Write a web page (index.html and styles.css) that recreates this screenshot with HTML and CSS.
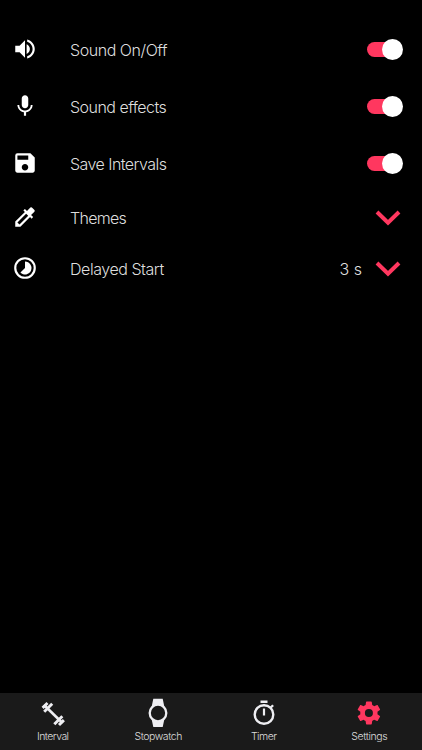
FILE: index.html
```html
<!DOCTYPE html>
<html lang="en">
<head>
<meta charset="utf-8">
<title>Settings</title>
<link rel="stylesheet" href="styles.css">
</head>
<body>
<main class="settings">
  <div class="row">
    <svg class="icon" viewBox="0 0 24 24"><path d="M3 9v6h4l5 5V4L7 9H3zm10.500-1.500v9c1.800-.7 3-2.450 3-4.500s-1.200-3.800-3-4.500zM14 3.230v2.060c2.890.86 5 3.540 5 6.710s-2.110 5.850-5 6.710v2.060c4.010-.91 7-4.490 7-8.770s-2.990-7.860-7-8.770z"/></svg>
    <span class="label">Sound On/Off</span><span class="toggle"></span>
  </div>
  <div class="row">
    <svg class="icon" viewBox="0 0 24 24"><path d="M12 14c1.660 0 3-1.340 3-3V5c0-1.660-1.340-3-3-3S9 3.340 9 5v6c0 1.660 1.340 3 3 3zm5.300-3c0 3-2.540 5.100-5.300 5.100S6.700 14 6.700 11H5c0 3.410 2.720 6.230 6 6.720V21h2v-3.280c3.280-.48 6-3.300 6-6.720h-1.700z"/></svg>
    <span class="label effects">Sound effects</span><span class="toggle"></span>
  </div>
  <div class="row">
    <svg class="icon" viewBox="0 0 24 24"><path d="M17 3H5a2 2 0 0 0-2 2v14c0 1.100.89 2 2 2h14c1.100 0 2-.9 2-2V7l-4-4zm-5 16c-1.660 0-3-1.340-3-3s1.340-3 3-3 3 1.340 3 3-1.340 3-3 3zm3-10H5V5h10v4z"/></svg>
    <span class="label intervals">Save Intervals</span><span class="toggle"></span>
  </div>
  <div class="row short">
    <svg class="icon" viewBox="0 0 24 24"><path d="M20.710 5.630l-2.340-2.340a1 1 0 0 0-1.410 0l-3.120 3.120-1.930-1.910-1.410 1.410 1.420 1.420L3 16.250V21h4.750l8.920-8.920 1.420 1.420 1.410-1.410-1.920-1.920 3.120-3.120c.4-.4.4-1.030.01-1.420zM6.920 19L5 17.080l8.060-8.060 1.920 1.920L6.920 19z"/></svg>
    <span class="label themes">Themes</span>
    <svg class="chevron" viewBox="0 0 26 16"><path d="M2 2L13 12.700 24 2"/></svg>
  </div>
  <div class="row short">
    <svg class="icon" viewBox="0 0 24 24"><path d="M12 2a10 10 0 1 0 0 20 10 10 0 0 0 0-20zm0 18a8 8 0 1 1 0-16 8 8 0 0 1 0 16zM12 6v6l-4.240 4.240A6 6 0 1 0 12 6z"/></svg>
    <span class="label">Delayed Start</span>
    <span class="value">3 s</span>
    <svg class="chevron" viewBox="0 0 26 16"><path d="M2 2L13 12.700 24 2"/></svg>
  </div>
</main>
<nav class="tabs">
  <div class="tab interval">
    <svg viewBox="0 0 30 30"><g class="line"><path d="M6 7l18.500 18" stroke-width="2.600"/><path d="M4.600 9.900l4.900-4.900M6.200 13.800l8-8M16.300 26.200l8-8M21 27l4.900-4.900" stroke-width="2.900" stroke-linecap="butt"/></g></svg>
    <span>Interval</span>
  </div>
  <div class="tab stopwatch">
    <svg viewBox="0 0 30 30"><path d="M10.300.8h9.400l1.500 7.200H8.800zM8.800 22h12.400l-1.500 7h-9.400z"/><circle class="face" cx="15" cy="15" r="8.300" stroke-width="2.300"/></svg>
    <span>Stopwatch</span>
  </div>
  <div class="tab timer">
    <svg viewBox="0 0 30 30"><path d="M11.500 2.600h7v2.300h-7zM13.900 10.500h2.200v7h-2.200z"/><g class="line"><circle cx="15" cy="16.500" r="9.300" stroke-width="2.400"/><path d="M21.500 9.800l2.600-2.600" stroke-width="2.300"/></g></svg>
    <span>Timer</span>
  </div>
  <div class="tab active">
    <svg viewBox="0 0 30 30"><path transform="translate(1.100 1.200) scale(1.150)" d="M19.430 12.980c.04-.32.070-.64.070-.98s-.03-.66-.07-.98l2.110-1.650c.19-.15.24-.42.120-.64l-2-3.460c-.12-.22-.39-.3-.61-.22l-2.490 1c-.52-.4-1.080-.73-1.690-.98l-.38-2.650A.488.488 0 0 0 14 2h-4c-.25 0-.46.180-.49.420l-.38 2.650c-.61.250-1.170.590-1.690.98l-2.490-1c-.23-.09-.49 0-.61.220l-2 3.460c-.13.220-.07.490.12.640l2.110 1.650c-.04.320-.07.650-.07.980s.03.660.07.980l-2.110 1.650c-.19.150-.24.420-.12.640l2 3.460c.12.220.39.300.61.220l2.490-1c.52.400 1.080.730 1.690.980l.38 2.650c.03.240.24.420.49.420h4c.25 0 .46-.18.490-.42l.38-2.650c.61-.25 1.170-.59 1.690-.98l2.490 1c.23.090.49 0 .61-.22l2-3.460c.12-.22.070-.49-.12-.64l-2.110-1.650zM12 15.500a3.500 3.500 0 1 1 0-7 3.500 3.500 0 0 1 0 7z"/></svg>
    <span>Settings</span>
  </div>
</nav>
</body>
</html>
```
FILE: styles.css
```css
* { box-sizing: border-box; }
body {
  margin: 0;
  height: 750px;
  display: flex;
  flex-direction: column;
  background: #000;
  color: #dedede;
  font-family: Inter, "Liberation Sans", sans-serif;
  font-weight: 300;
  overflow: hidden;
}
.settings { flex: 1; padding-top: 21px; }
.row {
  height: 57px;
  display: flex;
  align-items: center;
  padding: 0 19px 0 12px;
}
.row.short { height: 51px; padding-right: 21px; }
.icon { width: 26px; height: 26px; fill: #fff; margin-top: -1px; }
.label {
  margin-left: 32px;
  margin-top: 1px;
  flex: 1;
  font-size: 16px;
  line-height: 20px;
  white-space: nowrap;
  letter-spacing: -.45px;
}
.effects { letter-spacing: -.53px; }
.intervals { letter-spacing: -.55px; }
.themes { letter-spacing: -.7px; }
.value { font-size: 16px; margin-top: 1px; margin-right: 13px; }
.toggle {
  width: 36px;
  height: 21px;
  display: grid;
  align-items: center;
  margin-top: -1px;
}
.toggle::before,
.toggle::after { content: ""; grid-area: 1 / 1; }
.toggle::before {
  width: 30px;
  height: 15px;
  border-radius: 8px;
  background: #ff375f;
}
.toggle::after {
  justify-self: end;
  width: 21px;
  height: 21px;
  border-radius: 50%;
  background: #fff;
}
.chevron {
  width: 26px;
  height: 16px;
  overflow: visible;
  fill: none;
  stroke: #ff375f;
  stroke-width: 4;
}
.tabs {
  height: 57px;
  display: grid;
  grid-template-columns: repeat(4, 1fr);
  background: #1a1a1a;
}
.tab { display: flex; flex-direction: column; align-items: center; padding-top: 5px; }
.tab svg { width: 30px; height: 30px; fill: #eeeef2; stroke: none; }
.tab .line { fill: none; stroke: #eeeef2; }
.tab .face { fill: #1a1a1a; stroke: #eeeef2; }
.tab span { margin-top: 2px; font-size: 10.500px; line-height: 14px; letter-spacing: -.4px; }
.interval span { letter-spacing: -.55px; }
.stopwatch span { letter-spacing: -.45px; }
.timer span { letter-spacing: -.5px; }
.tab.active svg { fill: #ff375f; }
```
